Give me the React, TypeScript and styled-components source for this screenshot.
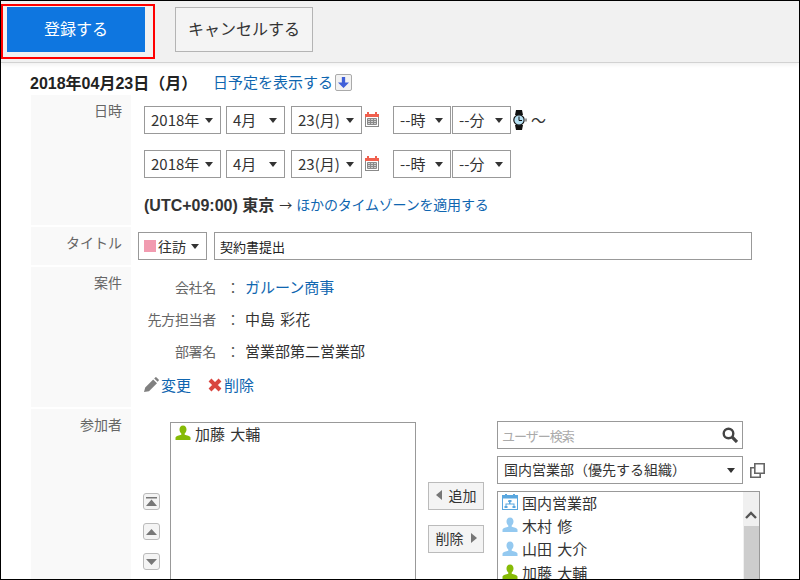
import React from "react";
import styled, { createGlobalStyle } from "styled-components";

const FONT = `"Noto Sans CJK JP", "Liberation Sans", sans-serif`;
const LATIN_BOLD = `"Liberation Sans", "Noto Sans CJK JP", sans-serif`;

const Global = createGlobalStyle`
  html, body { margin: 0; padding: 0; background: #fff; }
  * { box-sizing: border-box; }
`;

const PersonIcon: React.FC<{ color: string }> = ({ color }) => (
  <svg width="16" height="16" viewBox="0 0 16 16">
    <path
      fill={color}
      d="M8 .5c2.300 0 3.500 1.700 3.500 4 0 1.800-.8 3.200-1.800 4v1.300c2.200.6 5.300 1.300 5.800 2.700V15H.5v-2.500c.5-1.400 3.600-2.100 5.800-2.700V8.500c-1-.8-1.800-2.200-1.800-4 0-2.300 1.200-4 3.500-4z"
    />
  </svg>
);

const CalendarIcon = () => (
  <svg width="14" height="15" viewBox="0 0 14 15">
    <rect x="0" y="2" width="14" height="13" fill="#8a8a8a" />
    <rect x="0" y="2" width="14" height="3" fill="#f0604e" />
    <rect x="2" y="0" width="2" height="3" fill="#f0604e" />
    <rect x="10" y="0" width="2" height="3" fill="#f0604e" />
    <rect x="1" y="5" width="12" height="9" fill="#fff" />
    <path stroke="#8a8a8a" strokeWidth="1" fill="#cfcfcf" d="M2.500 6.500h9v6h-9zM2.500 8.500h9M2.500 10.500h9M5.500 6.500v6M8.500 6.500v6" />
  </svg>
);

const WatchIcon = () => (
  <svg width="15" height="20" viewBox="0 0 15 20">
    <path fill="#111" d="M3 0h6l1 5H2zM2 15h8l-1 5H3z" />
    <circle cx="6" cy="10" r="5.200" fill="#b5dff2" stroke="#111" strokeWidth="1.200" />
    <path stroke="#111" strokeWidth="1" fill="none" d="M6 6.500V10.500H9" />
    <rect x="11.500" y="8.500" width="2.500" height="3" fill="#999" />
  </svg>
);

const PencilIcon = () => (
  <svg width="15" height="15" viewBox="0 0 15 15">
    <path fill="#808080" d="M0 15l1.200-4.600 8-8L13 6.200l-8 8zM10.200 1.400l1-1a1 1 0 0 1 1.400 0l2 2a1 1 0 0 1 0 1.400l-1 1z" />
  </svg>
);

const CrossIcon = () => (
  <svg width="14" height="14" viewBox="0 0 14 14">
    <path stroke="#d9453f" strokeWidth="4" d="M2 2l10 10M12 2L2 12" />
  </svg>
);

const SearchIcon = () => (
  <svg width="16" height="16" viewBox="0 0 16 16">
    <circle cx="6.500" cy="6.500" r="4.800" fill="none" stroke="#444" strokeWidth="2.400" />
    <path stroke="#444" strokeWidth="3.200" d="M10.200 10.200l4.800 4.800" />
  </svg>
);

const CopyIcon = () => (
  <svg width="15" height="15" viewBox="0 0 15 15">
    <path fill="none" stroke="#666" strokeWidth="1.600" d="M4.800 .8h9.400v9.400H4.800z" />
    <path fill="none" stroke="#666" strokeWidth="1.600" d="M4.800 4.800H.8v9.400h9.400v-4" />
  </svg>
);

const OrgIcon = () => (
  <svg width="16" height="16" viewBox="0 0 16 16">
    <rect x=".5" y="1.500" width="15" height="14" fill="#fff" stroke="#5aa7df" />
    <rect x="0" y="1" width="16" height="3.500" fill="#5aa7df" />
    <rect x="3" y="0" width="2" height="2" fill="#5aa7df" />
    <rect x="11" y="0" width="2" height="2" fill="#5aa7df" />
    <path fill="#5aa7df" d="M6.500 6h3v2h-1v1.500H12.500V12h1v2h-3v-2h1v-1.500h-7V12h1v2h-3v-2h1V9.500h3.500V8h-1z" />
  </svg>
);

const DownArrowIcon = () => (
  <svg width="11" height="11" viewBox="0 0 10 10">
    <path fill="#3f5fd8" d="M3.500 0h3v5H10L5 10 0 5h3.500z" />
  </svg>
);

const Frame = styled.div`
  width: 800px;
  height: 580px;
  overflow: hidden;
  border: 1px solid #000;
  font-family: ${FONT};
  font-size: 15px;
  word-spacing: 2px;
  color: #333;
  background: #fff;
`;

const Toolbar = styled.div`
  height: 62px;
  display: flex;
  align-items: flex-start;
  gap: 20px;
  padding-top: 3px;
  background: #f1f1f1;
  border-bottom: 1px solid #d2d2d2;
  box-shadow: 0 2px 4px rgba(0, 0, 0, 0.06);
`;

const Highlight = styled.div`
  width: 154px;
  height: 55px;
  border: 2px solid #f00;
  padding: 1px 0 0 4px;
`;

const PrimaryButton = styled.button`
  display: block;
  width: 138px;
  height: 45px;
  border: 0;
  padding: 0 0 3px;
  background: #0e76e0;
  color: #fff;
  font: 16px ${FONT};
`;

const SecondaryButton = styled.button`
  width: 138px;
  height: 45px;
  margin-top: 3px;
  border: 1px solid #b4b4b4;
  padding: 0 0 3px;
  background: #f4f4f4;
  color: #333;
  font: 16px ${FONT};
`;

const Content = styled.div`
  padding-left: 30px;
`;

const DateHeading = styled.div`
  height: 25px;
  margin: 7px 0 0 -1px;
  padding-bottom: 2px;
  display: flex;
  align-items: center;
`;

const DateTitle = styled.span`
  width: 183px;
  font-family: ${LATIN_BOLD};
  font-weight: 700;
  font-size: 16px;
  color: #222;
`;

const Link = styled.a`
  color: #0f66b0;
  font-size: 15px;
`;

const DayLinkIcon = styled.span`
  width: 17px;
  height: 17px;
  margin: 2px 0 0 2px;
  display: inline-flex;
  align-items: center;
  justify-content: center;
  border: 1px solid #aaa;
  border-radius: 2px;
  background: #f2f2f2;
`;

const Row = styled.div<{ $height: number }>`
  display: flex;
  height: ${(p) => p.$height}px;
  margin-bottom: 2px;
`;

const Label = styled.div`
  width: 100px;
  flex-shrink: 0;
  padding: 5px 9px 0 0;
  background: #f9f9f9;
  color: #666;
  font-size: 14px;
  text-align: right;
  line-height: 20px;
`;

const Field = styled.div<{ $pl: number; $pt: number }>`
  flex: 1;
  min-width: 0;
  padding: ${(p) => p.$pt}px 0 0 ${(p) => p.$pl}px;
`;

const Line = styled.div<{ $mb?: number }>`
  display: flex;
  align-items: center;
  height: 28px;
  margin-bottom: ${(p) => p.$mb ?? 0}px;
`;

const SelectBox = styled.div<{ $w: number; $ml?: number; $fs?: number }>`
  width: ${(p) => p.$w}px;
  height: 28px;
  margin-left: ${(p) => p.$ml ?? 0}px;
  padding: 0 7px 2px 6px;
  flex-shrink: 0;
  display: flex;
  align-items: center;
  justify-content: space-between;
  border: 1px solid #999;
  background: #fff;
  font-size: ${(p) => p.$fs ?? 15}px;
  color: #333;
  white-space: nowrap;
`;

const Caret = styled.i`
  width: 0;
  height: 0;
  flex-shrink: 0;
  margin-top: 2px;
  border: 4.500px solid transparent;
  border-top: 5px solid #333;
  border-bottom: 0;
`;

const CalendarSlot = styled.span`
  margin: -1px 14px 0 3px;
  display: flex;
`;

const WatchSlot = styled.span`
  margin-left: 2px;
  display: flex;
`;

const Wave = styled.span`
  margin: 0 0 2px 3px;
  font-size: 15px;
`;

const Zone = styled.div`
  margin-top: 14px;
  padding-bottom: 2px;
  display: flex;
  align-items: center;
  height: 26px;
  font-size: 13px;
`;

const ZoneName = styled.b`
  font-family: ${LATIN_BOLD};
  font-size: 16px;
  word-spacing: 0;
  margin-right: 5px;
`;

const ZoneLink = styled(Link)`
  margin-left: 4px;
  font-size: 14px;
  letter-spacing: -0.2px;
`;

const EventChip = styled.i`
  width: 12px;
  height: 12px;
  margin-right: 2px;
  background: #f19bb0;
`;

const EventSelect = styled(SelectBox)`
  padding: 0 5px 1px;
  justify-content: flex-start;
  gap: 5px;
`;

const EventLabel = styled.span`
  display: flex;
  align-items: center;
`;

const TitleInput = styled.input`
  width: 538px;
  height: 28px;
  margin-left: 7px;
  padding: 0 5px;
  border: 1px solid #999;
  color: #222;
  font: 13px ${FONT};
`;

const InfoRow = styled.div`
  display: flex;
  height: 32px;
  padding-bottom: 3px;
  align-items: center;
`;

const InfoKey = styled.span`
  width: 72px;
  text-align: right;
  color: #666;
  font-size: 14px;
  letter-spacing: -0.3px;
`;

const InfoColon = styled.span`
  width: 29px;
  padding-left: 10px;
  font-size: 14px;
  color: #555;
`;

const InfoValue = styled.span`
  color: #333;
`;

const ActionLine = styled.div`
  margin-top: 1px;
  padding-bottom: 1px;
  display: flex;
  align-items: center;
  height: 32px;
  gap: 17px;
`;

const Action = styled.span`
  display: flex;
  align-items: center;
  gap: 2px;
`;

const Members = styled.div`
  display: flex;
  align-items: flex-start;
`;

const MoveColumn = styled.div`
  width: 27px;
  padding-top: 71px;
  display: flex;
  flex-direction: column;
  gap: 13px;
`;

const MoveButton = styled.button`
  width: 17px;
  height: 17px;
  padding: 0;
  display: flex;
  align-items: center;
  justify-content: center;
  border: 1px solid #bbb;
  border-radius: 3px;
  background: #f4f4f4;
`;

const ListBox = styled.div`
  width: 246px;
  height: 170px;
  padding: 0 4px;
  border: 1px solid #999;
  overflow: hidden;
`;

const Person = styled.div`
  display: flex;
  align-items: center;
  gap: 4px;
  height: 23.300px;
  padding-bottom: 3px;
  color: #333;
  white-space: nowrap;
`;

const TransferColumn = styled.div`
  width: 81px;
  padding: 60px 0 0 12px;
  display: flex;
  flex-direction: column;
  gap: 15px;
`;

const TransferButton = styled.button`
  width: 56px;
  height: 28px;
  padding: 0 0 2px;
  display: flex;
  align-items: center;
  justify-content: center;
  gap: 7px;
  border: 1px solid #bbb;
  background: #f4f4f4;
  color: #333;
  font: 14px ${FONT};
`;

const SideArrow = styled.i<{ $dir: "left" | "right" }>`
  width: 0;
  height: 0;
  border: 5px solid transparent;
  ${(p) => (p.$dir === "left" ? "border-right: 6px solid #777; border-left: 0;" : "border-left: 6px solid #777; border-right: 0;")}
`;

const Picker = styled.div`
  width: 270px;
  margin-top: -1px;
`;

const SearchBox = styled.div`
  width: 246px;
  height: 28px;
  padding: 0 4px;
  display: flex;
  align-items: center;
  justify-content: space-between;
  border: 1px solid #999;
  color: #aaa;
  font-size: 13px;
  letter-spacing: -1px;
`;

const OrgLine = styled.div`
  margin-top: 7px;
  display: flex;
  align-items: center;
  gap: 7px;
`;

const Candidates = styled.div`
  margin-top: 7px;
  width: 263px;
  height: 120px;
  display: flex;
  border: 1px solid #999;
  overflow: hidden;
`;

const CandidateList = styled.div`
  flex: 1;
  padding: 0 4px;
`;

const ScrollBar = styled.div`
  width: 16px;
  background: #f0f0f0;
  display: flex;
  flex-direction: column;
  align-items: center;
`;

const ScrollUp = styled.div`
  height: 34px;
  display: flex;
  align-items: center;
  padding-top: 12px;
`;

const ScrollThumb = styled.div`
  width: 15px;
  flex: 1;
  background: #cdcdcd;
`;

const dateSelects = (
  <>
    <SelectBox $w={77}>2018年<Caret /></SelectBox>
    <SelectBox $w={59} $ml={5}>4月<Caret /></SelectBox>
    <SelectBox $w={71} $ml={6}>23(月)<Caret /></SelectBox>
    <CalendarSlot><CalendarIcon /></CalendarSlot>
    <SelectBox $w={58}>--時<Caret /></SelectBox>
    <SelectBox $w={59} $ml={1}>--分<Caret /></SelectBox>
  </>
);

export default function App() {
  return (
    <Frame>
      <Global />
      <Toolbar>
        <Highlight>
          <PrimaryButton>登録する</PrimaryButton>
        </Highlight>
        <SecondaryButton>キャンセルする</SecondaryButton>
      </Toolbar>
      <Content>
        <DateHeading>
          <DateTitle>2018年04月23日（月）</DateTitle>
          <Link>日予定を表示する</Link>
          <DayLinkIcon>
            <DownArrowIcon />
          </DayLinkIcon>
        </DateHeading>
        <Row $height={130}>
          <Label>日時</Label>
          <Field $pl={13} $pt={11}>
            <Line $mb={16}>
              {dateSelects}
              <WatchSlot><WatchIcon /></WatchSlot>
              <Wave>～</Wave>
            </Line>
            <Line>{dateSelects}</Line>
            <Zone>
              <ZoneName>(UTC+09:00) 東京</ZoneName>
              →<ZoneLink>ほかのタイムゾーンを適用する</ZoneLink>
            </Zone>
          </Field>
        </Row>
        <Row $height={38}>
          <Label>タイトル</Label>
          <Field $pl={7} $pt={5}>
            <Line>
              <EventSelect $w={69} $fs={14}>
                <EventLabel><EventChip />往訪</EventLabel>
                <Caret />
              </EventSelect>
              <TitleInput defaultValue="契約書提出" />
            </Line>
          </Field>
        </Row>
        <Row $height={140}>
          <Label>案件</Label>
          <Field $pl={13} $pt={5}>
            <InfoRow>
              <InfoKey>会社名</InfoKey>
              <InfoColon>：</InfoColon>
              <Link>ガルーン商事</Link>
            </InfoRow>
            <InfoRow>
              <InfoKey>先方担当者</InfoKey>
              <InfoColon>：</InfoColon>
              <InfoValue>中島 彩花</InfoValue>
            </InfoRow>
            <InfoRow>
              <InfoKey>部署名</InfoKey>
              <InfoColon>：</InfoColon>
              <InfoValue>営業部第二営業部</InfoValue>
            </InfoRow>
            <ActionLine>
              <Action><PencilIcon /><Link>変更</Link></Action>
              <Action><CrossIcon /><Link>削除</Link></Action>
            </ActionLine>
          </Field>
        </Row>
        <Row $height={200}>
          <Label>参加者</Label>
          <Field $pl={12} $pt={13}>
            <Members>
              <MoveColumn>
                <MoveButton>
                  <svg width="11" height="9" viewBox="0 0 11 9"><path fill="#777" d="M0 0h11v1.500H0zM5.500 2.500L11 9H0z" /></svg>
                </MoveButton>
                <MoveButton>
                  <svg width="11" height="6" viewBox="0 0 11 6"><path fill="#777" d="M5.500 0L11 6H0z" /></svg>
                </MoveButton>
                <MoveButton>
                  <svg width="11" height="6" viewBox="0 0 11 6"><path fill="#777" d="M0 0h11L5.500 6z" /></svg>
                </MoveButton>
              </MoveColumn>
              <ListBox>
                <Person><PersonIcon color="#86bb06" />加藤 大輔</Person>
              </ListBox>
              <TransferColumn>
                <TransferButton><SideArrow $dir="left" />追加</TransferButton>
                <TransferButton>削除<SideArrow $dir="right" /></TransferButton>
              </TransferColumn>
              <Picker>
                <SearchBox>
                  ユーザー検索
                  <SearchIcon />
                </SearchBox>
                <OrgLine>
                  <SelectBox $w={246} $fs={14}>国内営業部（優先する組織）<Caret /></SelectBox>
                  <CopyIcon />
                </OrgLine>
                <Candidates>
                  <CandidateList>
                    <Person><OrgIcon />国内営業部</Person>
                    <Person><PersonIcon color="#94c9f0" />木村 修</Person>
                    <Person><PersonIcon color="#94c9f0" />山田 大介</Person>
                    <Person><PersonIcon color="#86bb06" />加藤 大輔</Person>
                  </CandidateList>
                  <ScrollBar>
                    <ScrollUp>
                      <svg width="12" height="8" viewBox="0 0 12 8"><path fill="none" stroke="#555" strokeWidth="2.400" d="M1 7l5-5 5 5" /></svg>
                    </ScrollUp>
                    <ScrollThumb />
                  </ScrollBar>
                </Candidates>
              </Picker>
            </Members>
          </Field>
        </Row>
      </Content>
    </Frame>
  );
}
